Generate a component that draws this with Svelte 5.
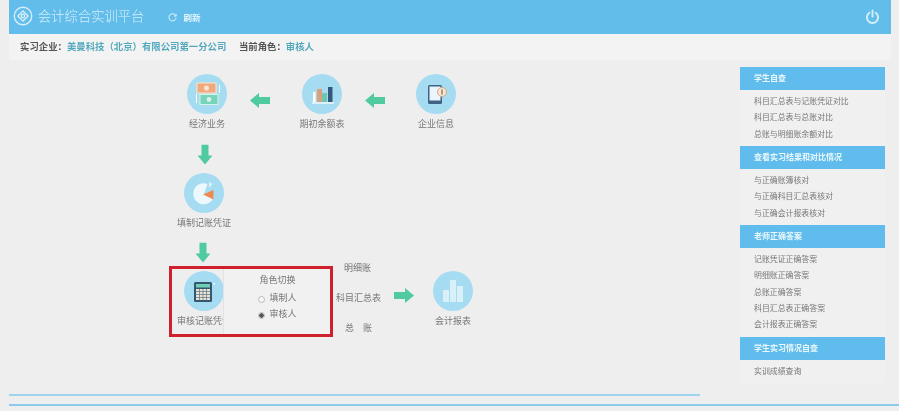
<script>
    const groups = [
        { title: '学生自查', items: ['科目汇总表与记账凭证对比', '科目汇总表与总账对比', '总账与明细账余额对比'] },
        { title: '查看实习结果和对比情况', items: ['与正确账簿核对', '与正确科目汇总表核对', '与正确会计报表核对'] },
        { title: '老师正确答案', items: ['记账凭证正确答案', '明细账正确答案', '总账正确答案', '科目汇总表正确答案', '会计报表正确答案'] },
        { title: '学生实习情况自查', items: ['实训成绩查询'] }
    ];

    const nodes = [
        { id: 'money', label: '经济业务', x: 187, y: 14 },
        { id: 'bars', label: '期初余额表', x: 302, y: 14 },
        { id: 'phone', label: '企业信息', x: 416, y: 14 },
        { id: 'pie', label: '填制记账凭证', x: 184, y: 113 },
        { id: 'calc', label: '审核记账凭证', x: 184, y: 211 },
        { id: 'report', label: '会计报表', x: 433, y: 211 }
    ];

    // rotation is from the right-pointing arrow
    const arrows = [
        { x: 250, y: 33, r: 180 },
        { x: 365, y: 33, r: 180 },
        { x: 195, y: 87, r: 90 },
        { x: 193, y: 185, r: 90 },
        { x: 394, y: 228, r: 0 }
    ];

    const ledgers = [
        { label: '明细账', x: 344, y: 202 },
        { label: '科目汇总表', x: 336, y: 232 },
        { label: '总　账', x: 345, y: 262 }
    ];
</script>

<div class="page">
    <header class="top">
        <div class="brand">
            <svg width="20" height="20" viewBox="0 0 22 22" fill="none" stroke="#d4f0fb" stroke-width="1.5">
                <circle cx="11" cy="11" r="9.6" />
                <path d="M11 5.4 16.6 11 11 16.6 5.4 11Z" />
                <circle cx="11" cy="11" r="1.9" />
            </svg>
            <span class="title">会计综合实训平台</span>
        </div>
        <div class="refresh">
            <svg width="9" height="9" viewBox="0 0 10 10" fill="none" stroke="#e4f5fc" stroke-width="1.1">
                <path d="M8.6 3A4 4 0 1 0 9 5.4" />
                <path d="M9 1v2.4H6.6" />
            </svg>
            <span>刷新</span>
        </div>
        <svg class="power" width="13" height="15" viewBox="0 0 14 16" fill="none" stroke="#d4f0fb" stroke-width="2" stroke-linecap="round">
            <path d="M7 1.5v6.5" />
            <path d="M3.6 4A6 6 0 1 0 10.4 4" />
        </svg>
    </header>

    <div class="info">
        <b>实习企业：</b><b class="link">美曼科技（北京）有限公司第一分公司</b>
        <b class="role">当前角色：</b><b class="link">审核人</b>
    </div>

    <main class="main">
        <section class="canvas">
            {#each nodes as node}
                <div class="node" style="left: {node.x}px; top: {node.y}px">
                    <div class="circle">
                        {#if node.id === 'money'}
                            <svg width="30" height="30" viewBox="0 0 30 30">
                                <rect x="5" y="4" width="19" height="10" fill="#f0a87c" stroke="#fbe3cf" />
                                <circle cx="14.500" cy="9" r="2.6" fill="#fbe3cf" />
                                <rect x="8" y="15.500" width="18" height="10" fill="#78d4b8" stroke="#d4f3e8" />
                                <circle cx="17" cy="20.500" r="2.4" fill="#d4f3e8" />
                                <path d="M4.500 15v9M27.500 6v8" stroke="#fff" stroke-width="1" />
                            </svg>
                        {:else if node.id === 'bars'}
                            <svg width="30" height="30" viewBox="0 0 30 30">
                                <rect x="6" y="13" width="2.500" height="10" fill="#fff" />
                                <rect x="10" y="10" width="5" height="13" fill="#d9a07e" />
                                <rect x="15" y="14" width="5" height="9" fill="#6cc7b0" />
                                <rect x="21" y="8" width="4.500" height="15" fill="#33587c" />
                                <path d="M5 24h22" stroke="#fff" stroke-width="1.200" />
                            </svg>
                        {:else if node.id === 'phone'}
                            <svg width="30" height="30" viewBox="0 0 30 30">
                                <rect x="7" y="6" width="14" height="19" rx="1.500" fill="#3f6285" />
                                <rect x="8.500" y="7.500" width="11" height="14" fill="#eaf6fb" />
                                <circle cx="21" cy="13" r="4.500" fill="#f6e7d6" stroke="#d7a987" />
                                <path d="M21 10.500v5" stroke="#a47a5c" stroke-width="1.500" />
                            </svg>
                        {:else if node.id === 'pie'}
                            <svg width="30" height="30" viewBox="0 0 30 30">
                                <path d="M15 16 18.500 6A10.500 10.500 0 1 0 25 18Z" fill="#edf8fc" />
                                <path d="M14 16.500 24.500 12v9.500Z" fill="#ee8a4f" />
                                <path d="M20 4 23 6 20.500 10Z" fill="#edf8fc" />
                            </svg>
                        {:else if node.id === 'calc'}
                            <svg width="30" height="30" viewBox="0 0 30 30">
                                <rect x="5" y="6" width="18" height="20" rx="1.500" fill="#35566f" />
                                <rect x="7" y="8" width="14" height="3.500" fill="#6fd0b5" />
                                <rect x="7" y="13" width="14" height="11" fill="#e9e3d7" />
                                <path d="M7 15.500h14M7 18.500h14M7 21.500h14M10.500 13v11M14 13v11M17.500 13v11" stroke="#6d7f8b" stroke-width=".8" />
                                <rect x="24.500" y="7" width="1.500" height="1.500" fill="#fff" />
                            </svg>
                        {:else}
                            <svg width="30" height="30" viewBox="0 0 30 30" fill="#d9f0f9">
                                <rect x="5" y="14" width="6" height="12" />
                                <rect x="12" y="4" width="6" height="22" />
                                <rect x="19" y="10" width="6" height="16" />
                            </svg>
                        {/if}
                    </div>
                    <div class="label">{node.label}</div>
                </div>
            {/each}

            {#each arrows as arrow}
                <svg class="arrow" style="left: {arrow.x}px; top: {arrow.y}px; transform: rotate({arrow.r}deg)" width="20" height="15" viewBox="0 0 20 15">
                    <path d="M0 4h11V0l9 7.500-9 7.500v-4H0Z" fill="#50cba0" />
                </svg>
            {/each}

            {#each ledgers as ledger}
                <div class="ledger" style="left: {ledger.x}px; top: {ledger.y}px">{ledger.label}</div>
            {/each}

            <!-- role switcher, red frame sits on top of it -->
            <div class="popup">
                <div class="popup-title">角色切换</div>
                <label class="radio"><span class="dot"></span>填制人</label>
                <label class="radio"><span class="dot on"></span>审核人</label>
            </div>
            <div class="frame"></div>
        </section>

        <aside class="side">
            {#each groups as group}
                <h3>{group.title}</h3>
                <ul>
                    {#each group.items as item}
                        <li>{item}</li>
                    {/each}
                </ul>
            {/each}
        </aside>
    </main>

    <footer class="foot">
        <div class="line-a"></div>
        <div class="line-b"></div>
    </footer>
</div>

<style>
    :global(body) {
        margin: 0;
        background: #eeeeee;
    }
    .page {
        width: 899px;
        height: 411px;
        overflow: hidden;
        display: flex;
        flex-direction: column;
        background: #eeeeee;
        color: #666;
        font-family: "Liberation Sans", "Noto Sans CJK SC", sans-serif;
        filter: blur(0.6px);
    }
    .top {
        height: 34px;
        flex: none;
        margin: 0 8px 0 9px;
        background: #63bdeb;
        display: flex;
        align-items: center;
        color: #d4f0fb;
    }
    .brand {
        display: flex;
        align-items: center;
        gap: 5px;
        margin-left: 4px;
        padding-right: 24px;
        padding-bottom: 3px;
    }
    .title {
        font-size: 13.3px;
        font-weight: 300;
    }
    .refresh {
        display: flex;
        align-items: center;
        gap: 6px;
        font-size: 8.5px;
        font-weight: 700;
        color: #e4f5fc;
    }
    .power {
        margin-left: auto;
        margin-right: 12px;
        margin-bottom: 2px;
    }
    .info {
        height: 26px;
        flex: none;
        margin: 0 8px 0 9px;
        padding-left: 11px;
        background: #f3f3f3;
        font-size: 9.4px;
        line-height: 26px;
        color: #555;
    }
    .link {
        color: #52a8bd;
    }
    .role {
        margin-left: 10px;
    }
    .main {
        flex: 1;
        display: flex;
        min-height: 0;
    }
    .canvas {
        position: relative;
        flex: 1;
    }
    .node {
        position: absolute;
        width: 40px;
        display: flex;
        flex-direction: column;
        align-items: center;
    }
    .circle {
        width: 40px;
        height: 40px;
        border-radius: 50%;
        background: #a6dcf2;
        display: flex;
        align-items: center;
        justify-content: center;
    }
    .label {
        margin-top: 4px;
        font-size: 9px;
        line-height: 12px;
        white-space: nowrap;
        color: #777;
    }
    .arrow {
        position: absolute;
    }
    .ledger {
        position: absolute;
        font-size: 9px;
        line-height: 12px;
        white-space: nowrap;
        color: #777;
    }
    .popup {
        position: absolute;
        left: 223px;
        top: 206px;
        width: 108px;
        height: 68px;
        box-sizing: border-box;
        background: #f1f1f1;
        border-left: 1px solid #e2e2e2;
        display: flex;
        flex-direction: column;
        align-items: center;
        padding-top: 8px;
        font-size: 9px;
        line-height: 12px;
        color: #777;
    }
    .popup-title {
        margin-bottom: 4px;
    }
    .radio {
        display: flex;
        align-items: center;
        gap: 4px;
        height: 16px;
    }
    .dot {
        width: 7px;
        height: 7px;
        box-sizing: border-box;
        border: 1px solid #bbb;
        border-radius: 50%;
        background: #f6f6f6;
        position: relative;
        top: 1px;
    }
    .dot.on {
        background: radial-gradient(circle, #555 0 2px, #f6f6f6 2.5px);
    }
    .frame {
        position: absolute;
        left: 169px;
        top: 206px;
        width: 164px;
        height: 71px;
        box-sizing: border-box;
        border: 3px solid #d01f2d;
    }
    .side {
        width: 145px;
        flex: none;
        margin: 7px 14px 0 0;
    }
    h3 {
        margin: 0;
        height: 23px;
        padding-left: 14px;
        background: #5fbcec;
        color: #eaf8fd;
        font-size: 8px;
        font-weight: 700;
        line-height: 23px;
    }
    ul {
        list-style: none;
        margin: 0;
        padding: 4px 0 3.2px 14px;
        background: #f0f0f0;
    }
    li {
        height: 16.3px;
        font-size: 7.9px;
        line-height: 16.3px;
        color: #777;
        white-space: nowrap;
    }
    .foot {
        flex: none;
        height: 17px;
    }
    .line-a {
        height: 2px;
        width: 691px;
        margin-left: 9px;
        background: #9ed4ee;
    }
    .line-b {
        height: 2px;
        margin: 8px 0 0 9px;
        background: #8ccbec;
    }
</style>
